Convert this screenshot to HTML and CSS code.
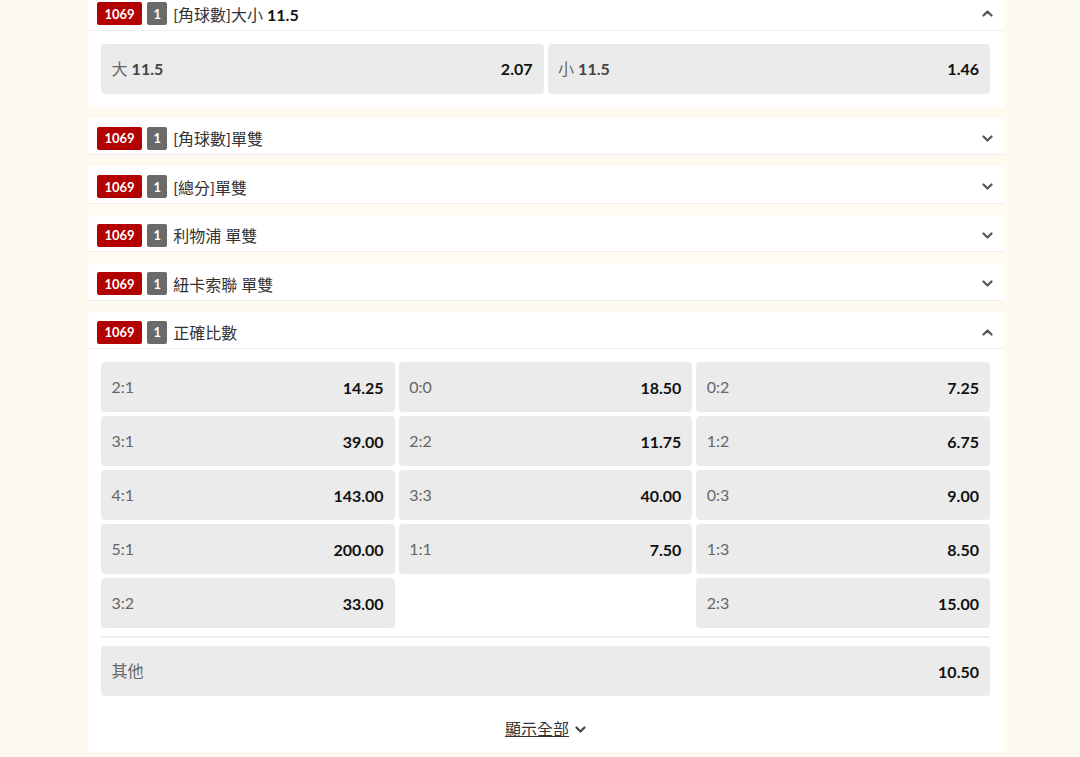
FILE: index.html
```html
<!DOCTYPE html>
<html lang="zh-Hant">

<head>
    <meta charset="UTF-8">
    <meta name="viewport" content="width=device-width, initial-scale=1.0">
    <title>正確比數</title>
    <link rel="stylesheet" href="styles.css">
</head>

<body>
    <div class="markets">

        <div class="market">
            <div class="market-head">
                <span class="badge badge-red">1069</span>
                <span class="badge badge-gray">1</span>
                <span class="market-title">[角球數]大小 <b>11.5</b></span>
                <svg class="chev" width="11" height="7" viewBox="0 0 11 7"><path d="M1.5 5.5l4-4 4 4" /></svg>
            </div>
            <div class="market-body">
                <div class="odds-grid cols-2">
                    <div class="odd"><span class="odd-name">大 <span class="odd-line">11.5</span></span><span class="odd-price">2.07</span></div>
                    <div class="odd"><span class="odd-name">小 <span class="odd-line">11.5</span></span><span class="odd-price">1.46</span></div>
                </div>
            </div>
        </div>

        <div class="market">
            <div class="market-head">
                <span class="badge badge-red">1069</span>
                <span class="badge badge-gray">1</span>
                <span class="market-title">[角球數]單雙</span>
                <svg class="chev" width="11" height="7" viewBox="0 0 11 7"><path d="M1.5 1.5l4 4 4-4" /></svg>
            </div>
        </div>

        <div class="market">
            <div class="market-head">
                <span class="badge badge-red">1069</span>
                <span class="badge badge-gray">1</span>
                <span class="market-title">[總分]單雙</span>
                <svg class="chev" width="11" height="7" viewBox="0 0 11 7"><path d="M1.5 1.5l4 4 4-4" /></svg>
            </div>
        </div>

        <div class="market">
            <div class="market-head">
                <span class="badge badge-red">1069</span>
                <span class="badge badge-gray">1</span>
                <span class="market-title">利物浦 單雙</span>
                <svg class="chev" width="11" height="7" viewBox="0 0 11 7"><path d="M1.5 1.5l4 4 4-4" /></svg>
            </div>
        </div>

        <div class="market">
            <div class="market-head">
                <span class="badge badge-red">1069</span>
                <span class="badge badge-gray">1</span>
                <span class="market-title">紐卡索聯 單雙</span>
                <svg class="chev" width="11" height="7" viewBox="0 0 11 7"><path d="M1.5 1.5l4 4 4-4" /></svg>
            </div>
        </div>

        <div class="market">
            <div class="market-head">
                <span class="badge badge-red">1069</span>
                <span class="badge badge-gray">1</span>
                <span class="market-title">正確比數</span>
                <svg class="chev" width="11" height="7" viewBox="0 0 11 7"><path d="M1.5 5.5l4-4 4 4" /></svg>
            </div>
            <div class="market-body last">
                <div class="odds-grid cols-3">
                    <div class="odd"><span class="odd-name">2:1</span><span class="odd-price">14.25</span></div>
                    <div class="odd"><span class="odd-name">0:0</span><span class="odd-price">18.50</span></div>
                    <div class="odd"><span class="odd-name">0:2</span><span class="odd-price">7.25</span></div>

                    <div class="odd"><span class="odd-name">3:1</span><span class="odd-price">39.00</span></div>
                    <div class="odd"><span class="odd-name">2:2</span><span class="odd-price">11.75</span></div>
                    <div class="odd"><span class="odd-name">1:2</span><span class="odd-price">6.75</span></div>

                    <div class="odd"><span class="odd-name">4:1</span><span class="odd-price">143.00</span></div>
                    <div class="odd"><span class="odd-name">3:3</span><span class="odd-price">40.00</span></div>
                    <div class="odd"><span class="odd-name">0:3</span><span class="odd-price">9.00</span></div>

                    <div class="odd"><span class="odd-name">5:1</span><span class="odd-price">200.00</span></div>
                    <div class="odd"><span class="odd-name">1:1</span><span class="odd-price">7.50</span></div>
                    <div class="odd"><span class="odd-name">1:3</span><span class="odd-price">8.50</span></div>

                    <div class="odd"><span class="odd-name">3:2</span><span class="odd-price">33.00</span></div>
                    <div class="empty"></div>
                    <div class="odd"><span class="odd-name">2:3</span><span class="odd-price">15.00</span></div>
                </div>

                <div class="divider"></div>

                <div class="odds-grid">
                    <div class="odd"><span class="odd-name">其他</span><span class="odd-price">10.50</span></div>
                </div>

                <div class="show-all">
                    <a href="#" class="show-all-link">顯示全部</a>
                    <svg class="chev chev-dark" width="11" height="7" viewBox="0 0 11 7"><path d="M1.5 1.5l4 4 4-4" /></svg>
                </div>
            </div>
        </div>

    </div>
</body>

</html>
```

FILE: styles.css
```css
* {
    box-sizing: border-box;
}

:root {
    --color-page: #fffaf0;
    --color-cell: #ebebeb;
    --color-line: #efefef;
    --color-red: #b30000;
    --color-gray: #6a6a6a;
}

body {
    margin: 0;
    background-color: var(--color-page);
    font-family: Lato, "Noto Sans CJK TC", sans-serif;
    font-size: 16px;
    color: #333;
}

.markets {
    width: 916px;
    margin-left: 88px;
    margin-top: -7px;
}

.market {
    background-color: #fff;
    margin-bottom: 11px;
}

.market-head {
    display: flex;
    align-items: center;
    height: 37.5px;
    padding: 9px 11px 4.5px 9px;
    border-bottom: 1px solid var(--color-line);
}

.badge {
    display: inline-flex;
    align-items: center;
    justify-content: center;
    height: 23px;
    border-radius: 2px;
    color: #fff;
    font-weight: bold;
    font-size: 13px;
}

.badge-red {
    background-color: var(--color-red);
    padding: 0 7.5px;
}

.badge-gray {
    background-color: var(--color-gray);
    width: 20px;
    margin-left: 5px;
}

.market-title {
    margin-left: 6px;
    flex: 1;
    color: #333;
    white-space: nowrap;
}

.market-title b {
    color: #111;
}

.chev {
    fill: none;
    stroke: #555;
    stroke-width: 2.2;
    stroke-linecap: round;
    stroke-linejoin: round;
}

.chev-dark {
    stroke: #444;
    margin-left: 6px;
}

.market-body {
    padding: 13px 14px 13px 13px;
}

.market-body.last {
    padding-bottom: 11px;
}

.odds-grid {
    display: grid;
    grid-template-columns: 1fr;
    gap: 4px;
}

.cols-2 {
    grid-template-columns: 1fr 1fr;
}

.cols-3 {
    grid-template-columns: 1fr 1fr 1fr;
}

.odd {
    display: flex;
    align-items: center;
    justify-content: space-between;
    height: 50px;
    padding: 0 11px 0 10.5px;
    background-color: var(--color-cell);
    border-radius: 4px;
}

.odd-name {
    color: #666;
    margin-top: -2px;
}

.odd-line {
    color: #444;
    font-weight: bold;
}

.odd-price {
    color: #111;
    font-weight: bold;
}

.divider {
    height: 2px;
    background-color: var(--color-line);
    margin: 8px 0;
}

.show-all {
    display: flex;
    align-items: center;
    justify-content: center;
    padding-top: 21px;
    line-height: 24px;
}

.show-all-link {
    color: #333;
    text-decoration: underline;
}
```
